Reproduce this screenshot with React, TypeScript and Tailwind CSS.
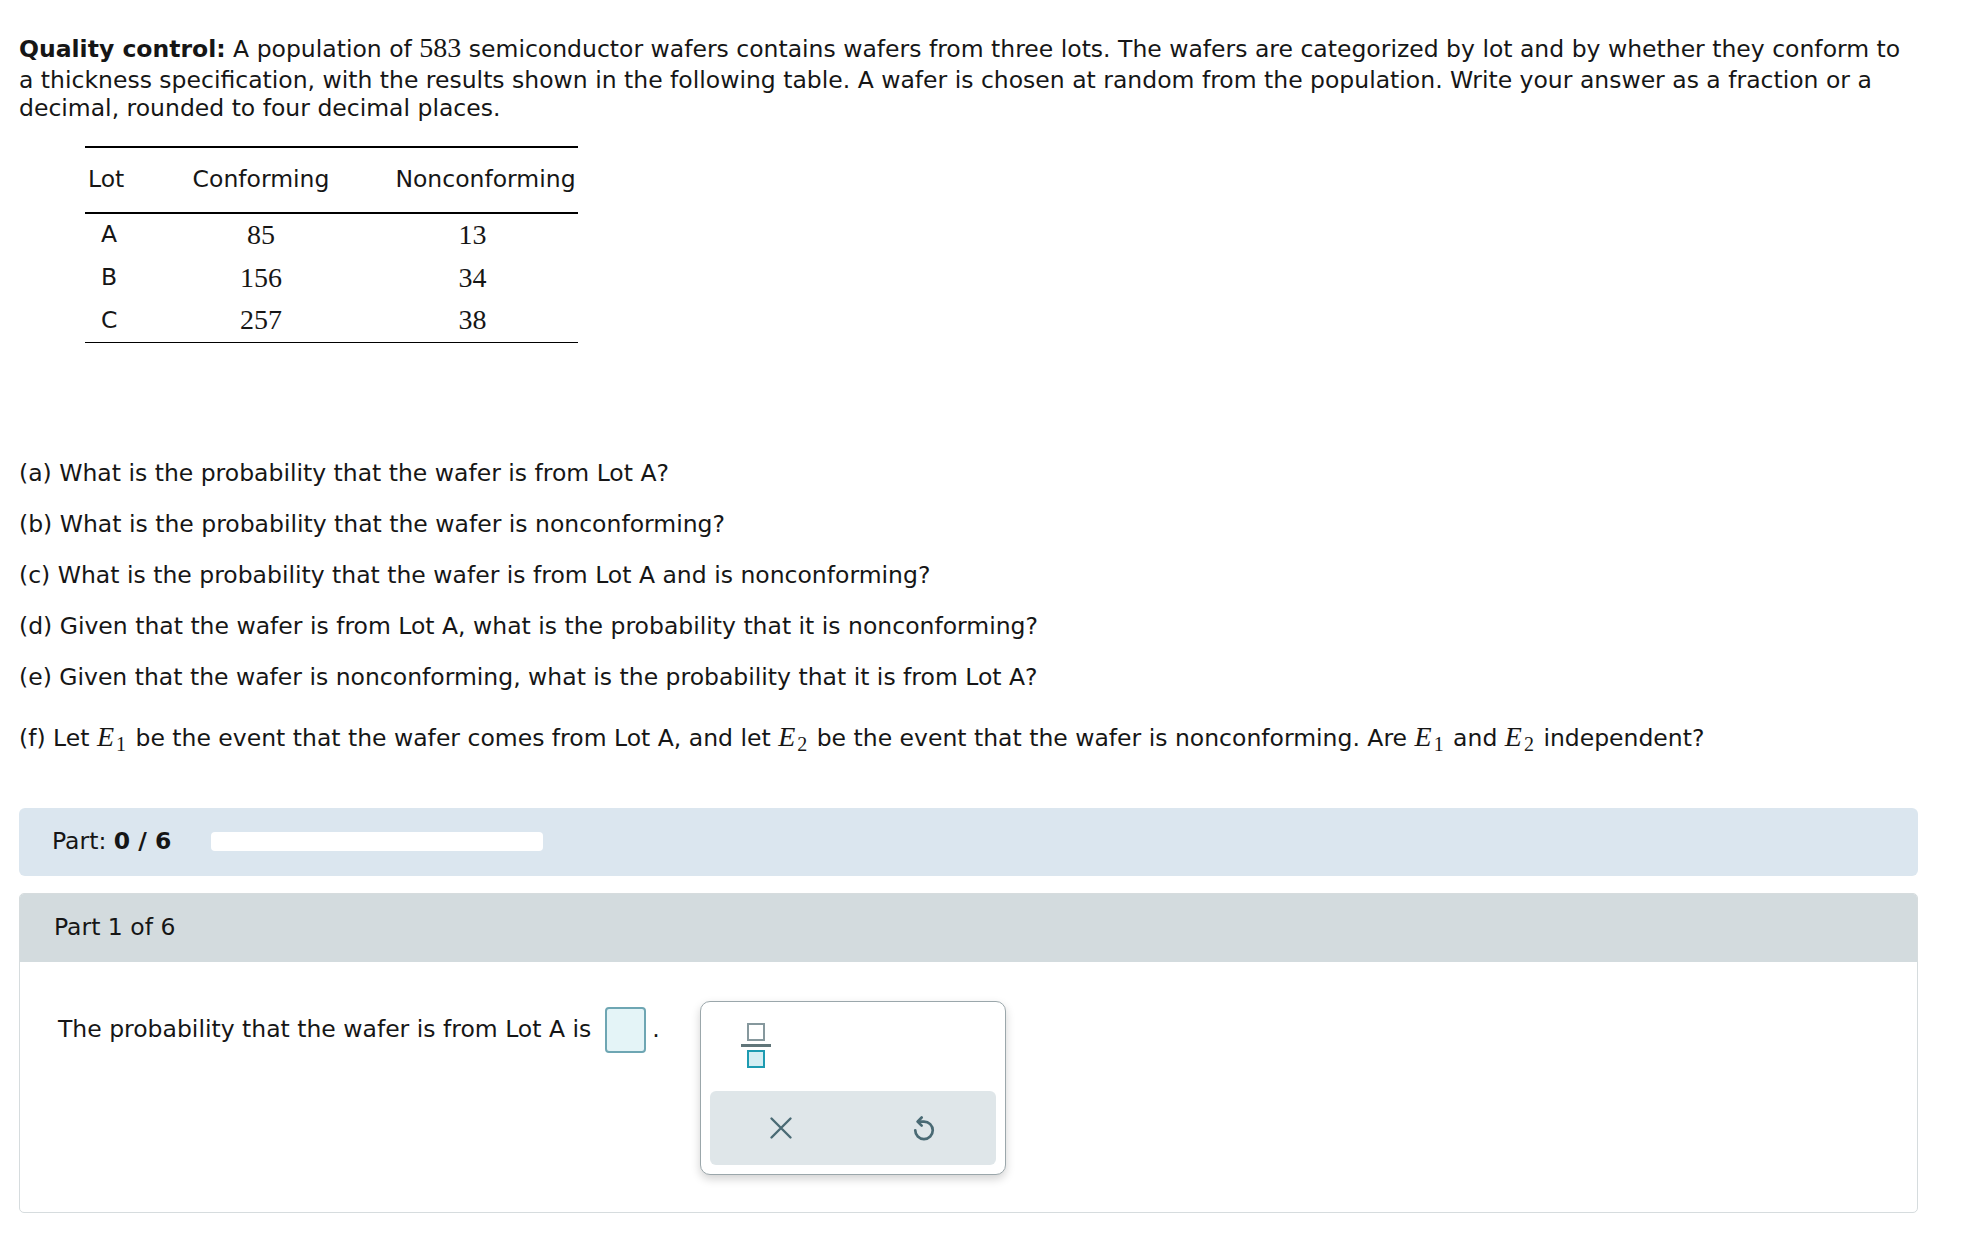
import React from 'react'

const Var = ({ n }: { n: string }) => (
    <span className="font-['Liberation_Serif',serif] text-[28px] leading-[28px]">
        <i className="mr-[2px]">E</i>
        <sub className="relative top-[5px] mr-[2px] text-[20px] not-italic leading-none">{n}</sub>
    </span>
)

const rows = [
    { lot: 'A', ok: '85', bad: '13' },
    { lot: 'B', ok: '156', bad: '34' },
    { lot: 'C', ok: '257', bad: '38' },
]

const questions = [
    '(a) What is the probability that the wafer is from Lot A?',
    '(b) What is the probability that the wafer is nonconforming?',
    '(c) What is the probability that the wafer is from Lot A and is nonconforming?',
    '(d) Given that the wafer is from Lot A, what is the probability that it is nonconforming?',
    '(e) Given that the wafer is nonconforming, what is the probability that it is from Lot A?',
]

const App = () => {
    return (
        <div className="min-h-screen bg-white pl-[19px] pr-[54px] pt-[30px] font-['DejaVu_Sans',Verdana,sans-serif] text-[23.5px] text-[#161616]">
            <p className="leading-[28px]">
                <b>Quality control:</b> A population of{' '}
                <span className="font-['Liberation_Serif',serif] text-[28px] leading-[36px]">583</span> semiconductor
                wafers contains wafers from three lots. The wafers are categorized by lot and by whether they
                conform to a thickness specification, with the results shown in the following table. A wafer is
                chosen at random from the population. Write your answer as a fraction or a decimal, rounded to
                four decimal places.
            </p>

            <table className="ml-[66px] mt-[24px] border-collapse">
                <thead>
                    <tr className="h-[66px] border-t-2 border-b-2 border-black">
                        <th className="w-[50px] pl-[3px] text-left font-normal">Lot</th>
                        <th className="w-[252px] font-normal">Conforming</th>
                        <th className="w-[191px] pl-[6px] font-normal">Nonconforming</th>
                    </tr>
                </thead>
                <tbody className="border-b border-black">
                    {rows.map((r) => (
                        <tr key={r.lot} className="h-[43px]">
                            <td className="pl-[16px] text-left">{r.lot}</td>
                            <td className="text-center font-['Liberation_Serif',serif] text-[28px]">{r.ok}</td>
                            <td className="pr-[20px] text-center font-['Liberation_Serif',serif] text-[28px]">{r.bad}</td>
                        </tr>
                    ))}
                </tbody>
            </table>

            <div className="mt-[116px] flex flex-col gap-[23px] leading-[28px]">
                {questions.map((q) => (
                    <p key={q}>{q}</p>
                ))}
                <p className="mt-[9px]">
                    (f) Let <Var n="1" /> be the event that the wafer comes from Lot A, and let <Var n="2" /> be the
                    event that the wafer is nonconforming. Are <Var n="1" /> and <Var n="2" /> independent?
                </p>
            </div>

            <div className="mt-[56px] flex h-[68px] items-center rounded-[6px] bg-[#dbe6ef] pl-[33px]">
                <span>
                    Part: <b>0 / 6</b>
                </span>
                <div className="ml-[40px] h-[19px] w-[332px] rounded-[4px] bg-white" />
            </div>

            <div className="mt-[17px] overflow-hidden rounded-[5px] border border-[#d6dcde]">
                <div className="flex h-[68px] items-center bg-[#d3dbde] pl-[34px]">Part 1 of 6</div>
                <div className="flex items-start pb-[37px] pl-[38px] pt-[44px]">
                    <div className="flex h-[48px] items-center">
                        <span>The probability that the wafer is from Lot A is</span>
                        <div className="ml-[14px] h-[46px] w-[41px] rounded-[4px] border-2 border-[#6ea6b3] bg-[#e4f4f7]" />
                        <span className="ml-[6px]">.</span>
                    </div>
                    <div className="ml-[40px] -mt-[5px] flex h-[174px] w-[306px] flex-col rounded-[10px] border border-[#9ba7ab] bg-white shadow-[0_4px_10px_rgba(0,0,0,0.18)]">
                        <div className="pl-[40px] pt-[21px]">
                            <div className="flex w-[30px] flex-col items-center">
                                <div className="h-[18px] w-[18px] border-2 border-[#86989d] bg-white" />
                                <div className="mt-[3px] h-[3px] w-[30px] bg-[#607579]" />
                                <div className="mt-[3px] h-[18px] w-[18px] border-2 border-[#1d9bb1] bg-[#d4eef3]" />
                            </div>
                        </div>
                        <div className="mx-[9px] mb-[9px] mt-auto flex h-[74px] rounded-[6px] bg-[#dfe6e9]">
                            <div className="flex flex-1 items-center justify-center">
                                <svg width="24" height="24" viewBox="0 0 24 24" fill="none" stroke="#4a6a74" strokeWidth="2.4" strokeLinecap="round">
                                    <path d="M2.5 2.5 L21.5 21.5 M21.5 2.5 L2.5 21.5" />
                                </svg>
                            </div>
                            <div className="flex flex-1 items-center justify-center">
                                <svg width="28" height="28" viewBox="0 0 24 24" fill="none" stroke="#4a6a74" strokeWidth="2.3" strokeLinecap="round" strokeLinejoin="round">
                                    <path d="M7 6.5 H12 A7.5 7.5 0 1 1 4.5 14" />
                                    <path d="M10 3 L6.5 6.5 L10 10" />
                                </svg>
                            </div>
                        </div>
                    </div>
                </div>
            </div>
        </div>
    )
}

export default App
